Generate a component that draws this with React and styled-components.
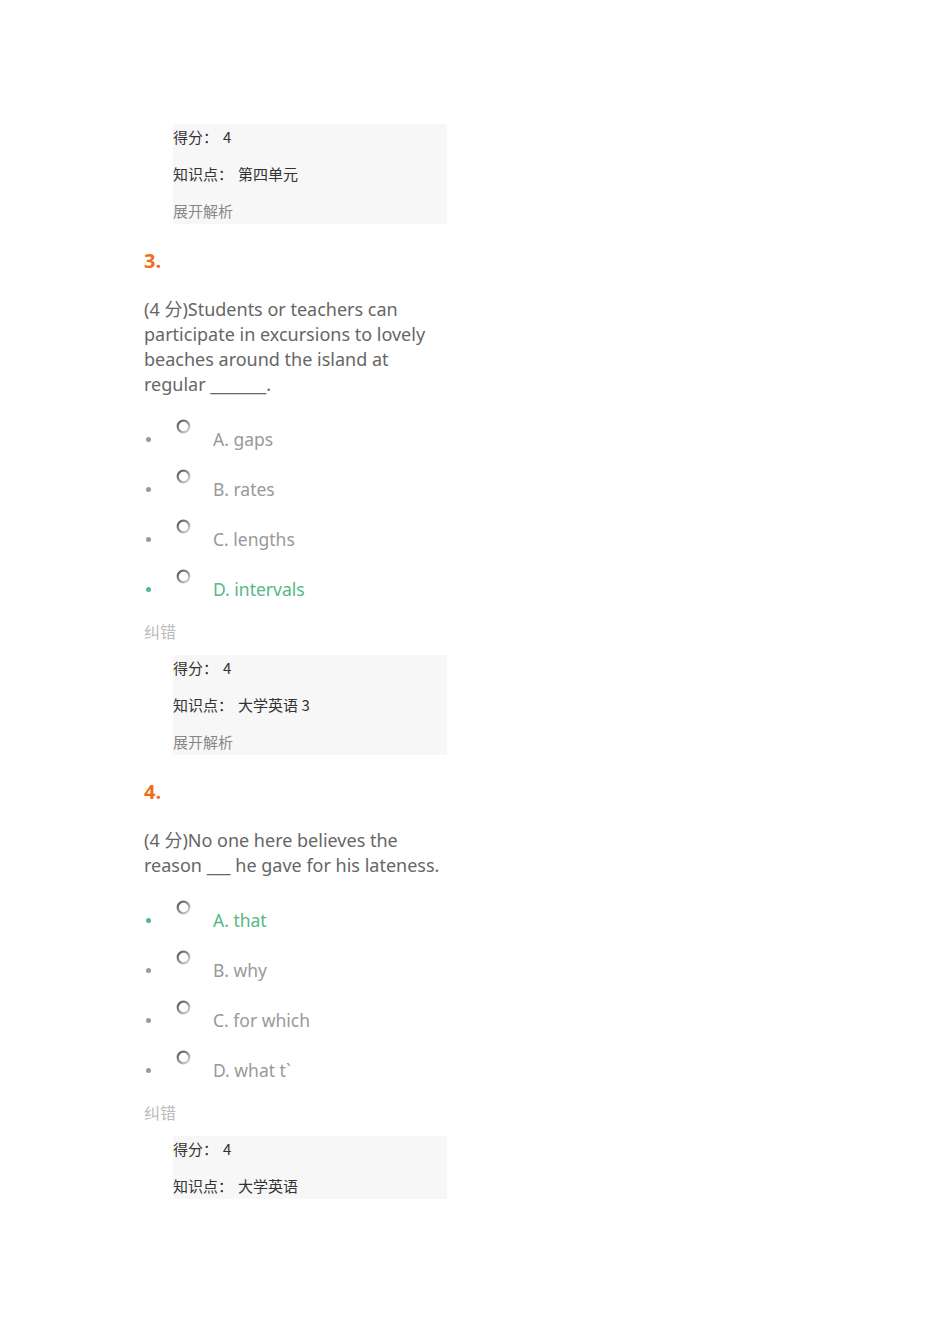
import React from 'react';
import styled, { createGlobalStyle } from 'styled-components';

const GlobalStyle = createGlobalStyle`
  body {
    margin: 0;
    background: #ffffff;
    font-family: "Noto Sans", "Noto Sans CJK SC", sans-serif;
  }
`;

const questions = [
  {
    num: '3.',
    text: '(4 分)Students or teachers can participate in excursions to lovely beaches around the island at regular _______.',
    options: ['A. gaps', 'B. rates', 'C. lengths', 'D. intervals'],
    answer: 3,
    point: '大学英语 3',
    expand: true,
  },
  {
    num: '4.',
    text: '(4 分)No one here believes the reason ___ he gave for his lateness.',
    options: ['A. that', 'B. why', 'C. for which', 'D. what t`'],
    answer: 0,
    point: '大学英语',
    expand: false,
  },
];

const Page = styled.div`
  padding: 124px 0 140px 144px;
  width: 303px;
`;

const ScorePanel = styled.div`
  margin-left: 29px;
  width: 274px;
  background: #f7f7f7;
  font-family: "Noto Sans CJK SC", "Noto Sans", sans-serif;
  font-size: 15px;
`;

const PanelRow = styled.div`
  line-height: 26px;
  height: 26px;
  color: ${(p) => (p.$muted ? '#888888' : '#333333')};
  & + & {
    margin-top: 11px;
  }
`;

const Value = styled.span`
  margin-left: 5px;
`;

const Number = styled.div`
  margin-top: 22px;
  font-family: "Open Sans", "Noto Sans", sans-serif;
  font-weight: 700;
  font-size: 20px;
  line-height: 30px;
  color: #f26b1d;
`;

const QuestionText = styled.p`
  margin: 21px 0 0;
  font-size: 18px;
  line-height: 25px;
  color: #666666;
  font-family: "Noto Sans", "Noto Sans CJK SC", sans-serif;
`;

const Options = styled.ul`
  list-style: none;
  margin: 22px 0 0;
  padding: 0;
`;

const Option = styled.li`
  display: flex;
  align-items: flex-start;
  height: 50px;
  color: ${(p) => (p.$right ? '#55b887' : '#999999')};
`;

const Dot = styled.span`
  width: 5px;
  height: 5px;
  border-radius: 50%;
  margin: 18px 0 0 2px;
  background: ${(p) => (p.$right ? '#55b887' : '#999999')};
`;

const Radio = styled.svg`
  margin-left: 25px;
  flex-shrink: 0;
`;

const Label = styled.span`
  margin: 8px 0 0 22px;
  font-size: 17.5px;
  line-height: 24px;
`;

const Report = styled.div`
  font-family: "Noto Sans CJK SC", sans-serif;
  font-size: 16px;
  line-height: 24px;
  color: #bbbbbb;
  margin-bottom: 12px;
`;

function RadioIcon() {
  return (
    <Radio width="15" height="15" viewBox="0 0 15 15">
      <defs>
        <linearGradient id="ring" x1="0" y1="0" x2="1" y2="1">
          <stop offset="0" stopColor="#555555" />
          <stop offset="0.55" stopColor="#999999" />
          <stop offset="1" stopColor="#e2e2e2" />
        </linearGradient>
      </defs>
      <circle cx="7.5" cy="7.5" r="5.8" fill="#ffffff" stroke="url(#ring)" strokeWidth="2.2" />
    </Radio>
  );
}

function Panel({ point, expand }) {
  return (
    <ScorePanel>
      <PanelRow>得分：<Value>4</Value></PanelRow>
      <PanelRow>知识点：<Value>{point}</Value></PanelRow>
      {expand && <PanelRow $muted>展开解析</PanelRow>}
    </ScorePanel>
  );
}

function Question({ q }) {
  return (
    <>
      <Number>{q.num}</Number>
      <QuestionText>{q.text}</QuestionText>
      <Options>
        {q.options.map((o, i) => (
          <Option key={o} $right={i === q.answer}>
            <Dot $right={i === q.answer} />
            <RadioIcon />
            <Label>{o}</Label>
          </Option>
        ))}
      </Options>
      <Report>纠错</Report>
      <Panel point={q.point} expand={q.expand} />
    </>
  );
}

export default function App() {
  return (
    <>
      <GlobalStyle />
      <Page>
        <Panel point="第四单元" expand />
        {questions.map((q) => (
          <Question key={q.num} q={q} />
        ))}
      </Page>
    </>
  );
}
